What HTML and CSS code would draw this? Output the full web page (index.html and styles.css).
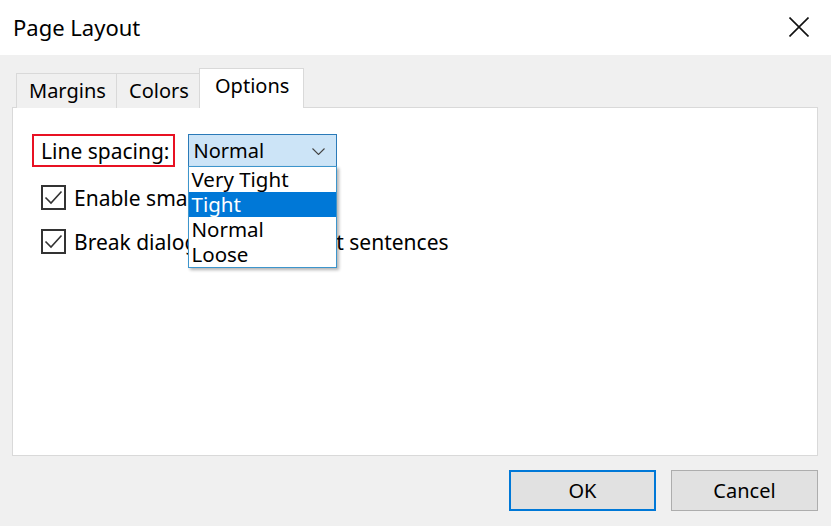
FILE: index.html
```html
<!DOCTYPE html>
<html lang="en">
<head>
  <meta charset="UTF-8">
  <title>Page Layout</title>
  <link rel="stylesheet" href="styles.css">
</head>
<body>
  <div class="dialog">
    <div class="titlebar">
      <span class="title">Page Layout</span>
      <svg class="close" width="20" height="20" viewBox="0 0 20 20">
        <path d="M0.5 0.5 L19.5 19.5 M19.5 0.5 L0.5 19.5" stroke="#111" stroke-width="1.6" fill="none"/>
      </svg>
    </div>

    <div class="body">
      <div class="tabs">
        <div class="tab">Margins</div>
        <div class="tab">Colors</div>
        <div class="tab active">Options</div>
      </div>

      <div class="panel">
        <div class="row">
          <span class="label highlight">Line spacing:</span>
          <div class="combo">
            <span>Normal</span>
            <svg class="chevron" width="13" height="7" viewBox="0 0 13 7">
              <path d="M0.5 0.5 L6.5 6.5 L12.5 0.5" stroke="#444" stroke-width="1.1" fill="none"/>
            </svg>
            <ul class="dropdown">
              <li>Very Tight</li>
              <li class="selected">Tight</li>
              <li>Normal</li>
              <li>Loose</li>
            </ul>
          </div>
        </div>

        <label class="check">
          <span class="box">
            <svg width="21" height="21" viewBox="0 0 21 21">
              <path d="M2.5 10.5 L8 16 L18.5 4.5" stroke="#333" stroke-width="1.6" fill="none"/>
            </svg>
          </span>
          Enable smart quotes
        </label>

        <label class="check">
          <span class="box">
            <svg width="21" height="21" viewBox="0 0 21 21">
              <path d="M2.5 10.5 L8 16 L18.5 4.5" stroke="#333" stroke-width="1.6" fill="none"/>
            </svg>
          </span>
          Break dialogue into distinct sentences
        </label>
      </div>

      <div class="buttons">
        <button class="btn default">OK</button>
        <button class="btn">Cancel</button>
      </div>
    </div>
  </div>
</body>
</html>
```

FILE: styles.css
```css
/* Dialog base */
* {
  margin: 0;
  padding: 0;
  box-sizing: border-box;
}

body {
  background: #f0f0f0;
  font-family: 'Noto Sans', 'Open Sans', sans-serif;
  color: #000;
  width: 831px;
  height: 526px;
  overflow: hidden;
}

.titlebar {
  height: 55px;
  background: #ffffff;
  display: flex;
  align-items: center;
  justify-content: space-between;
  padding: 0 22px 0 13px;
}

.title {
  font-size: 22px;
  margin-top: -1px;
}

.close {
  display: block;
  margin-top: -2px;
}

.body {
  padding: 13px 13px 0 12px;
}

/* Tabs */
.tabs {
  display: flex;
  align-items: flex-end;
  height: 40px;
  padding-left: 4px;
  position: relative;
  z-index: 1;
  margin-bottom: -1px;
}

.tab {
  height: 35px;
  padding: 0 12px;
  font-size: 20px;
  line-height: 33px;
  border: 1px solid #d9d9d9;
  border-bottom: none;
  border-right: none;
  background: #f0f0f0;
}

.tab:first-child {
  width: 100px;
}

.tab:nth-child(2) {
  width: 83px;
}

.tab.active {
  width: 105px;
  height: 40px;
  line-height: 34px;
  background: #ffffff;
  border-right: 1px solid #d9d9d9;
  padding: 0 15px;
}

/* Panel */
.panel {
  background: #ffffff;
  border: 1px solid #d9d9d9;
  height: 349px;
  padding: 26px 19px;
  font-size: 21px;
}

.row {
  display: flex;
  align-items: center;
  gap: 13px;
}

.label {
  height: 33px;
  line-height: 30px;
  padding: 0 4px 0 7px;
}

.highlight {
  border: 2px solid #e81123;
}

.combo {
  position: relative;
  width: 149px;
  height: 33px;
  background: #cce4f7;
  border: 1px solid #2a7ab8;
  display: flex;
  align-items: center;
  justify-content: space-between;
  padding: 0 11px 0 4px;
  font-size: 20px;
}

.chevron {
  display: block;
  margin-top: 2px;
}

.dropdown {
  list-style: none;
  position: absolute;
  left: -1px;
  top: 31px;
  width: 149px;
  background: #ffffff;
  border: 1px solid #3d95cc;
  box-shadow: 2px 2px 3px rgba(0, 0, 0, 0.3);
  z-index: 5;
}

.dropdown li {
  height: 25px;
  line-height: 24px;
  padding-left: 2px;
  font-size: 20.5px;
}

.dropdown li.selected {
  background: #0078d7;
  color: #ffffff;
}

/* Checkboxes */
.check {
  display: flex;
  align-items: center;
  gap: 8px;
  height: 25px;
  margin-left: 9px;
  margin-top: 18px;
}

.check + .check {
  margin-top: 19px;
}

.box {
  width: 25px;
  height: 25px;
  border: 2px solid #333333;
  display: flex;
  align-items: center;
  justify-content: center;
  background: #ffffff;
}

.box svg {
  display: block;
}

/* Buttons */
.buttons {
  display: flex;
  justify-content: flex-end;
  gap: 15px;
  margin-top: 14px;
}

.btn {
  width: 147px;
  height: 41px;
  background: #e1e1e1;
  border: 1px solid #adadad;
  font-family: 'Noto Sans', 'Open Sans', sans-serif;
  font-size: 20px;
  color: #000;
}

.btn.default {
  border: 2px solid #0078d7;
}
```
